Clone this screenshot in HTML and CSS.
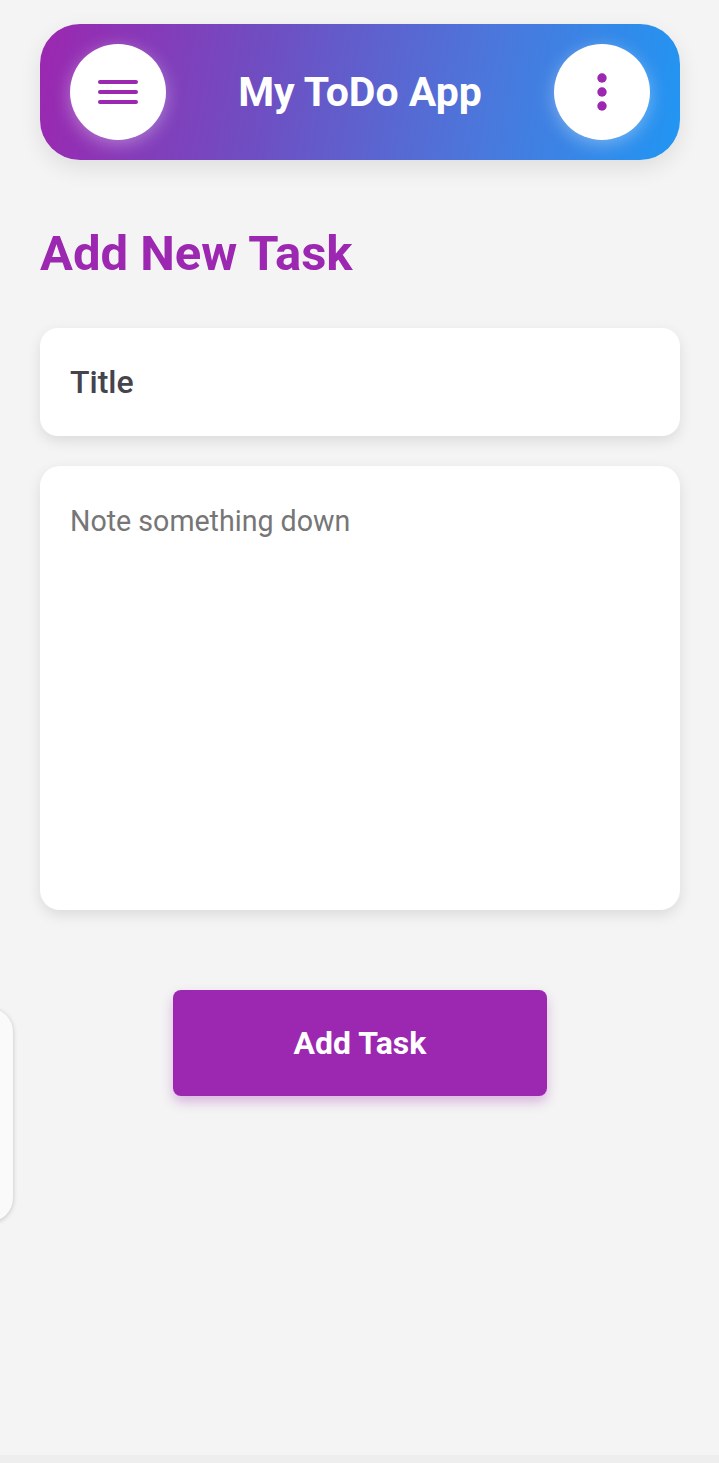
FILE: index.html
```html
<!DOCTYPE html>
<html lang="en">
<head>
<meta charset="utf-8">
<title>My ToDo App</title>
<link rel="stylesheet" href="styles.css">
</head>
<body>
<div class="page">
  <header class="app-bar">
    <button class="round-btn" aria-label="Menu">
      <svg width="40" height="24" viewBox="0 0 40 24">
        <rect x="0" y="0" width="40" height="4" rx="2" fill="#9c27b0"/>
        <rect x="0" y="10" width="40" height="4" rx="2" fill="#9c27b0"/>
        <rect x="0" y="20" width="40" height="4" rx="2" fill="#9c27b0"/>
      </svg>
    </button>
    <div class="app-title">My ToDo App</div>
    <button class="round-btn" aria-label="More">
      <svg width="10" height="38" viewBox="0 0 10 38">
        <circle cx="5" cy="5" r="4.7" fill="#9c27b0"/>
        <circle cx="5" cy="19" r="4.7" fill="#9c27b0"/>
        <circle cx="5" cy="33" r="4.7" fill="#9c27b0"/>
      </svg>
    </button>
  </header>

  <h1 class="section-title">Add New Task</h1>

  <input class="field title-field" type="text" value="Title">
  <textarea class="field note-field" placeholder="Note something down"></textarea>

  <div class="actions">
    <button class="add-btn">Add Task</button>
  </div>

  <div class="drawer-card"></div>
</div>
</body>
</html>
```

FILE: styles.css
```css
html {
  background: #eeeeee;
}
body {
  margin: 0;
  font-family: Roboto, "Noto Sans", "Liberation Sans", sans-serif;
}
.page {
  position: relative;
  overflow: hidden;
  box-sizing: border-box;
  min-height: 1455px;
  background: #f4f4f4;
  padding: 24px 39px 0 40px;
}
.app-bar {
  height: 136px;
  box-sizing: border-box;
  padding: 0 30px;
  border-radius: 40px;
  background: linear-gradient(100deg, #9c27b0 0%, #6f4ec2 35%, #4a78dc 70%, #2196f3 100%);
  display: flex;
  align-items: center;
  justify-content: space-between;
  box-shadow: 0 8px 22px rgba(0, 0, 0, 0.09);
}
.round-btn {
  width: 96px;
  height: 96px;
  border-radius: 50%;
  border: none;
  background: #ffffff;
  padding: 0;
  display: flex;
  align-items: center;
  justify-content: center;
  box-shadow: 0 4px 18px rgba(255, 255, 255, 0.35);
}
.app-title {
  color: #ffffff;
  font-size: 41px;
  font-weight: 700;
}
.section-title {
  margin: 66px 0 46px;
  color: #9c27b0;
  font-size: 49px;
  line-height: 56px;
  font-weight: 700;
}
.field {
  display: block;
  width: 100%;
  box-sizing: border-box;
  border: none;
  outline: none;
  background: #ffffff;
  font-family: inherit;
  box-shadow: 0 5px 14px rgba(0, 0, 0, 0.1);
}
.title-field {
  height: 108px;
  padding: 0 30px;
  border-radius: 18px;
  font-size: 32px;
  font-weight: 500;
  color: #45434b;
}
.note-field {
  margin-top: 30px;
  height: 444px;
  padding: 35px 30px 30px;
  border-radius: 20px;
  font-size: 28.6px;
  line-height: 1.4;
  resize: none;
  color: #45434b;
}
.note-field::placeholder {
  color: #767676;
}
.actions {
  display: flex;
  justify-content: center;
  margin-top: 80px;
}
.add-btn {
  width: 374px;
  height: 106px;
  border: none;
  border-radius: 8px;
  background: #9c27b0;
  color: #ffffff;
  font-family: inherit;
  font-size: 32px;
  font-weight: 700;
  box-shadow: 0 6px 12px rgba(156, 39, 176, 0.3);
}
.drawer-card {
  position: absolute;
  top: 1008px;
  left: -287px;
  width: 300px;
  height: 214px;
  border-radius: 24px;
  background: #fafafa;
  box-shadow: 0 1px 5px rgba(0, 0, 0, 0.2);
}
```
